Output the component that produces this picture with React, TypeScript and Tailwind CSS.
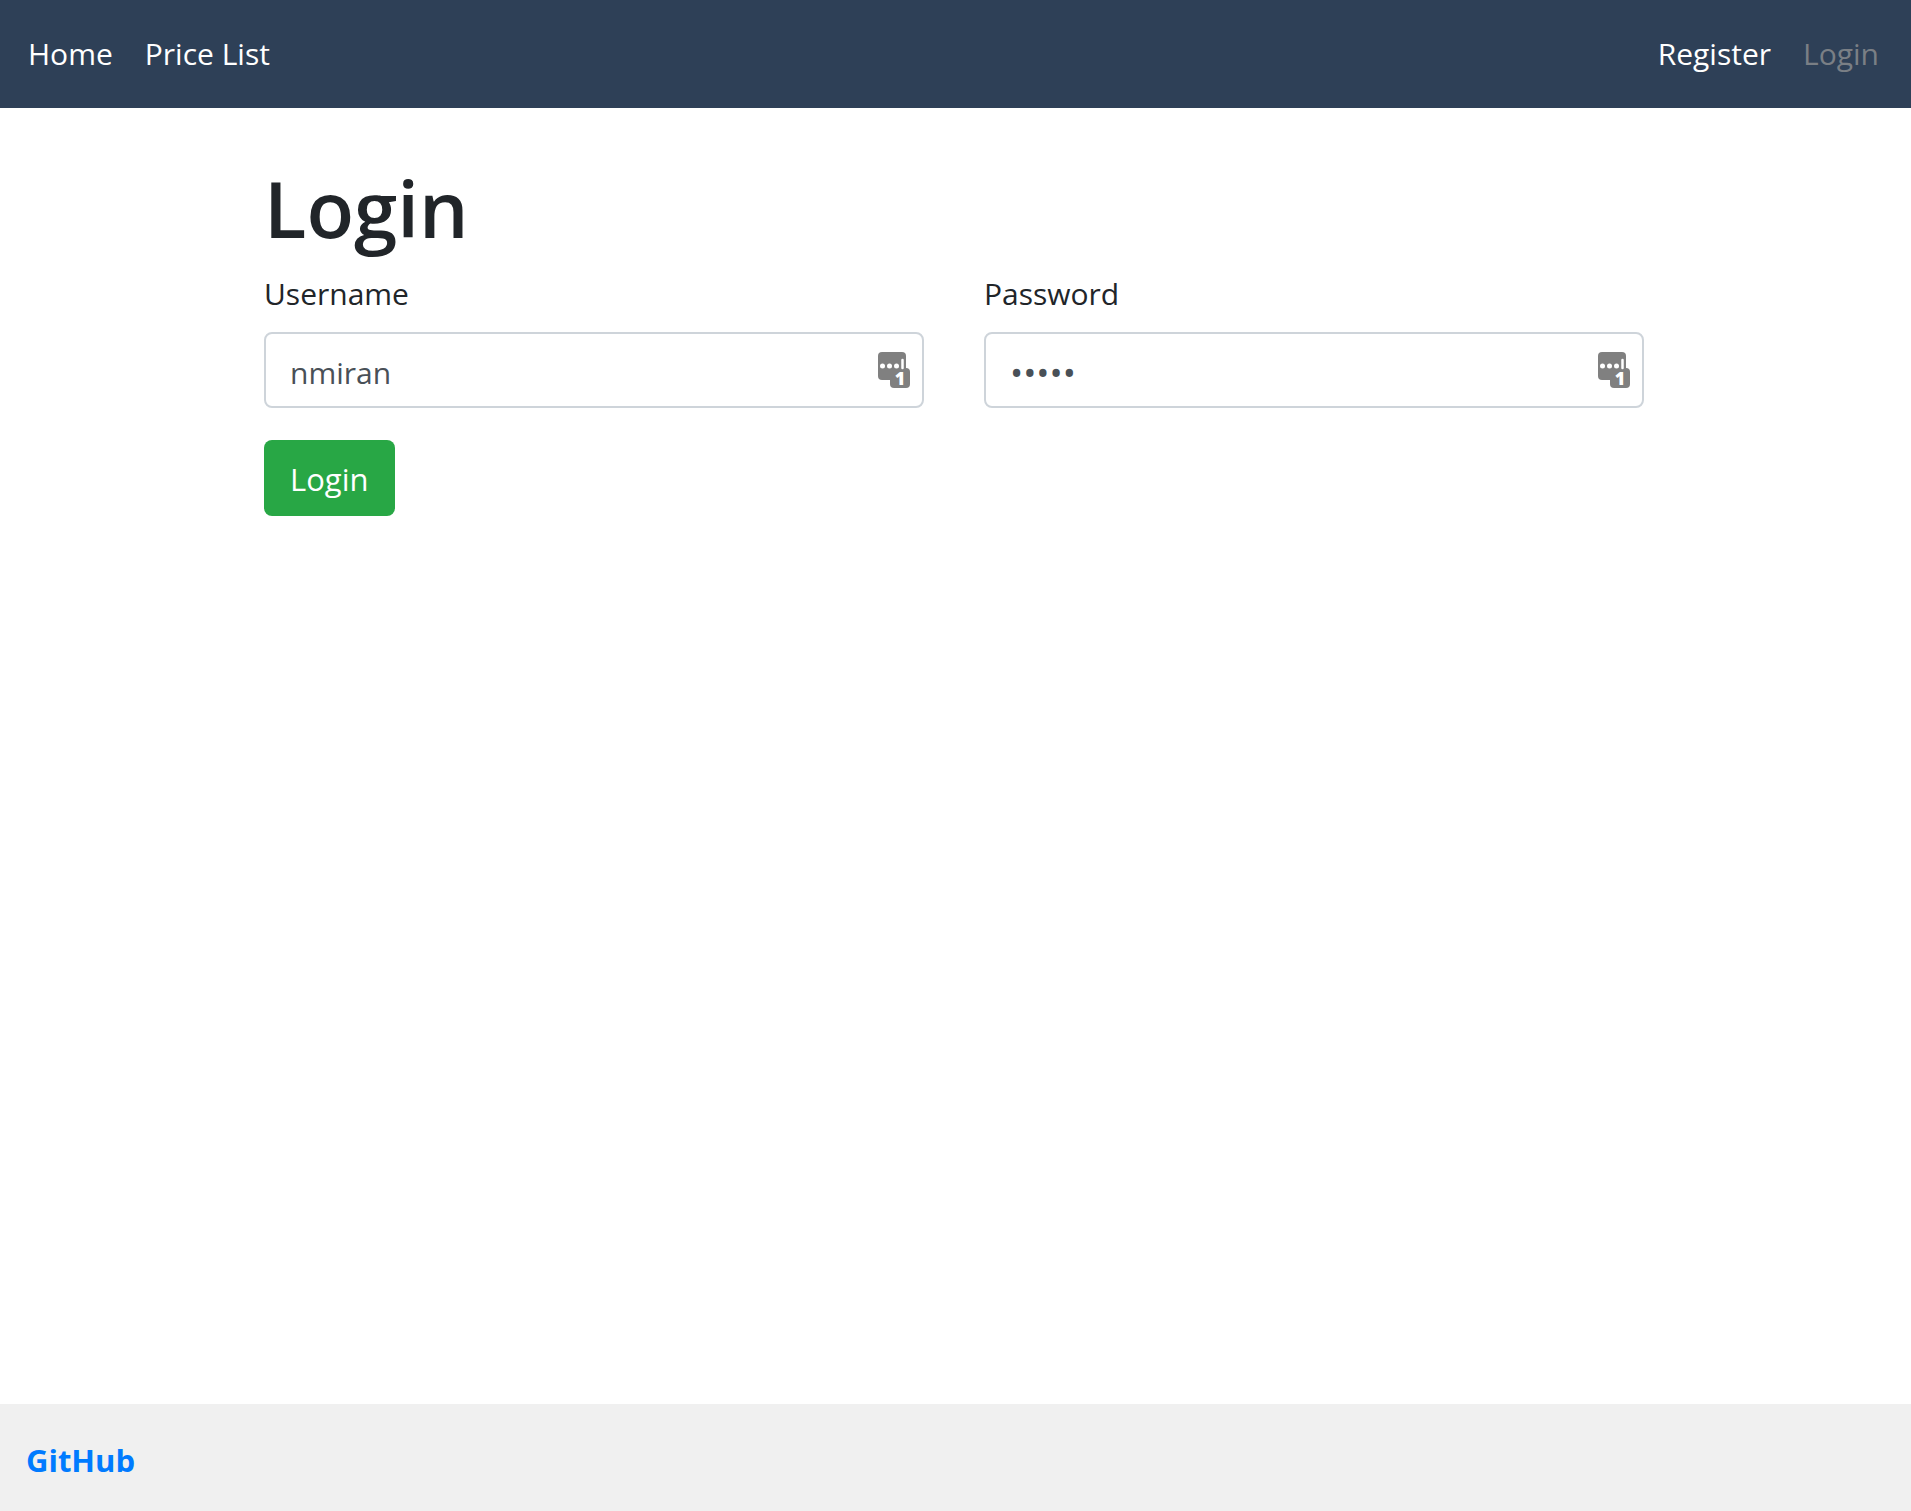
function PasswordManagerIcon() {
  return (
    <svg viewBox="0 0 32 36" className="pointer-events-none absolute top-5 right-3.5 h-9 w-8 overflow-visible" aria-hidden="true">
      <rect x="0" y="0" width="28" height="28" rx="4" fill="#808080" />
      <rect x="12" y="16" width="20" height="20" rx="4" fill="#808080" />
      <circle cx="4.5" cy="14" r="2.5" fill="#fff" />
      <circle cx="11.5" cy="14" r="2.5" fill="#fff" />
      <circle cx="18.5" cy="14" r="2.5" fill="#fff" />
      <path d="M24.5 8v8" stroke="#fff" strokeWidth="2.5" strokeLinecap="round" />
      <text x="22" y="33" textAnchor="middle" fontSize="18" fontWeight="800" fill="#fff">
        1
      </text>
    </svg>
  );
}

function Field({ id, label, type, value }: { id: string; label: string; type: string; value: string }) {
  return (
    <div className="min-w-0 flex-1">
      <label htmlFor={id} className="mb-3.5 block leading-12">
        {label}
      </label>
      <div className="relative">
        <input
          id={id}
          type={type}
          defaultValue={value}
          className={
            "block h-19 w-full rounded-lg border-2 border-[#ced4da] bg-white pt-1 pr-16 pl-6 text-[#495057] outline-none" +
            (type === "password" ? " text-[35px]" : "")
          }
        />
        <PasswordManagerIcon />
      </div>
    </div>
  );
}

export default function App() {
  return (
    <div className="flex min-h-screen flex-col bg-white font-['Open_Sans',sans-serif] text-[30px] leading-12 text-[#212529]">
      <nav className="flex items-center justify-between bg-[#2e4057] py-[30px] pr-8 pl-7 text-white">
        <div className="flex gap-8">
          <a href="#home">Home</a>
          <a href="#prices">Price List</a>
        </div>
        <div className="flex gap-8">
          <a href="#register">Register</a>
          <a href="#login" className="text-[#7a7f85]">
            Login
          </a>
        </div>
      </nav>
      <main className="flex-1 pt-13 pr-[3px]">
        <form className="mx-auto max-w-[1380px]" onSubmit={(e) => e.preventDefault()}>
          <h1 className="mb-3.5 text-[78px] leading-24 font-semibold">Login</h1>
          <div className="flex gap-15">
            <Field id="username" label="Username" type="text" value="nmiran" />
            <Field id="password" label="Password" type="password" value="admin" />
          </div>
          <button type="submit" className="mt-8 h-19 rounded-lg bg-[#28a745] px-[26px] pt-0.5 text-[31px] text-white">
            Login
          </button>
        </form>
      </main>
      <footer className="bg-[#f0f0f0] px-[26px] pt-8 pb-[27px] text-[31px]">
        <a href="#github" className="font-bold text-[#007bff]">
          GitHub
        </a>
      </footer>
    </div>
  );
}
